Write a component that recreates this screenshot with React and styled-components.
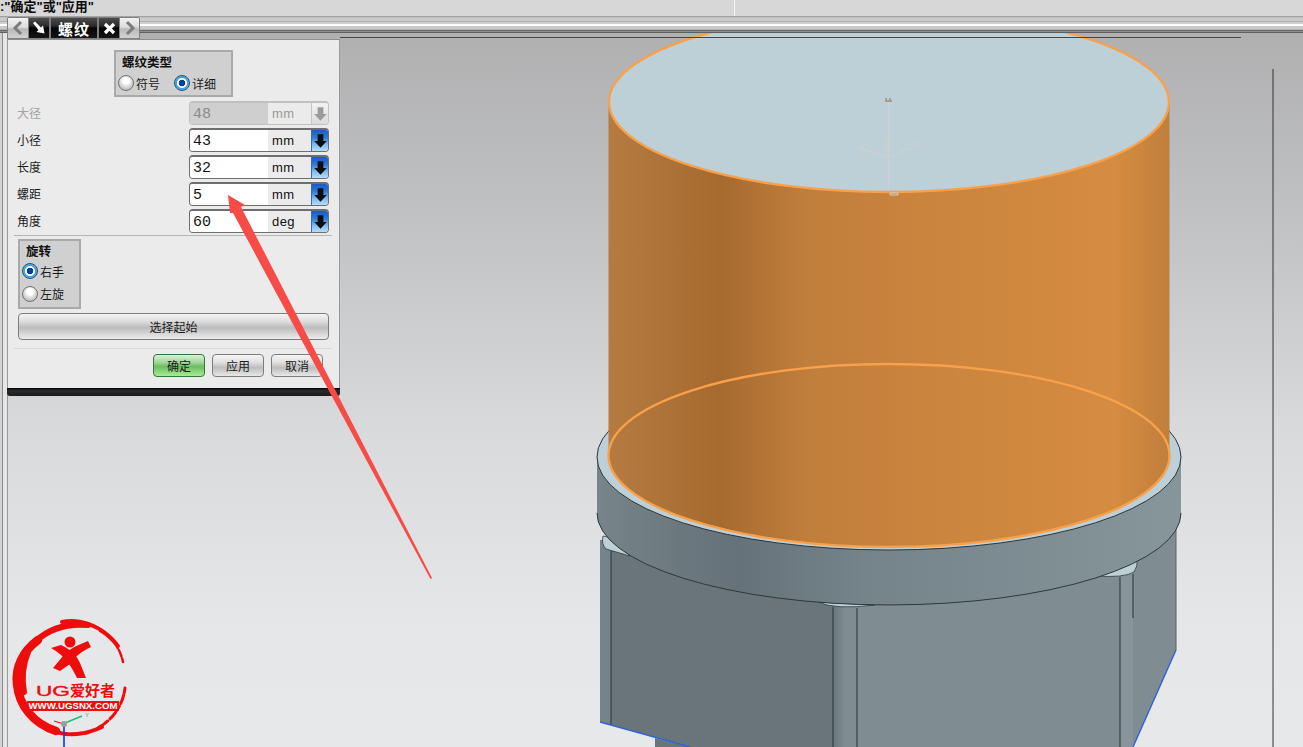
import React from "react";
import styled, { createGlobalStyle } from "styled-components";

const CJK = `"Noto Sans CJK SC", "Liberation Sans", sans-serif`;

const Global = createGlobalStyle`
  html, body { margin: 0; padding: 0; overflow: hidden; background: #d6d6d6; }
  * { box-sizing: border-box; }
`;

const Page = styled.div`
  position: relative;
  width: 1303px;
  height: 747px;
  overflow: hidden;
  display: flex;
  flex-direction: column;
  font-family: ${CJK};
  font-size: 12px;
  color: #1c1c1c;
`;

const TopBar = styled.header`
  flex: none;
  height: 33px;
  display: flex;
  flex-direction: column;
`;
const MessageRow = styled.div`
  height: 16px;
  display: flex;
  background: #d7d7d7;
`;
const Message = styled.div`
  width: 735px;
  height: 16px;
  border-right: 1px solid #f4f4f4;
  font: bold 13px/13px "Liberation Sans", ${CJK};
  color: #0c0c0c;
  white-space: nowrap;
`;
const Rails = styled.div`
  height: 17px;
  background: linear-gradient(
    to bottom,
    #a2a2a2 0 1px, #c0c0c0 1px 2px, #cbcbcb 2px 5px, #b0b0b0 5px 6px,
    #d0d0d0 6px 8px, #ffffff 8px 10px, #c8c8c8 10px 13px, #b4b4b4 13px 14px,
    #666666 14px 15px, #8c8c8c 15px 16px, #5f5f5f 16px 17px
  );
`;

const Workspace = styled.main`
  flex: 1;
  min-height: 0;
  display: flex;
`;
const LeftStrip = styled.aside`
  flex: none;
  width: 8px;
  background: linear-gradient(
    to right,
    #d2d2d2 0 2px, #8a8a8a 2px 3px, #e6e6e6 3px 7px, #9a9a9a 7px 8px
  );
`;
const Viewport = styled.section`
  flex: 1;
  min-width: 0;
  background: linear-gradient(to bottom, #b0b0b1 0, #c0c1c3 180px, #d9dadc 400px, #e6e7e9 600px, #e7e8ea 100%);
`;
const Scene = styled.svg`
  display: block;
  width: 100%;
  height: 100%;
`;

const Dialog = styled.div`
  position: absolute;
  left: 7px;
  top: 17px;
  width: 333px;
  display: flex;
  flex-direction: column;
  align-items: flex-start;
`;
const TabBar = styled.div`
  display: flex;
  height: 22px;
  width: 133px;
  padding: 1px;
  gap: 1px;
  background: #7f7f7f;
  border-radius: 2px 2px 0 0;
`;
const NavTab = styled.div`
  width: 20px;
  flex: ${(p) => (p.$last ? 1 : "none")};
  display: flex;
  align-items: center;
  justify-content: center;
  background: linear-gradient(to bottom, #f2f2f2 0, #dedede 45%, #b9b9b9 55%, #d2d2d2 100%);
`;
const DarkTab = styled.div`
  width: ${(p) => p.$w || 20}px;
  margin: ${(p) => p.$m || 0};
  flex: none;
  display: flex;
  align-items: center;
  justify-content: center;
  background: linear-gradient(to bottom, #4c4c4c 0, #2a2a2a 40%, #060606 50%, #151515 100%);
  color: #fff;
  font-weight: 700;
  font-size: 15px;
  letter-spacing: 1px;
`;
const Panel = styled.div`
  width: 332px;
  margin-left: 1px;
  height: 349px;
  background: #ebebeb;
  border-top: 1px solid #8f8f8f;
  border-right: 1px solid #9a9a9a;
  padding: 10px 10px 0 10px;
  display: flex;
  flex-direction: column;
`;
const BottomBar = styled.div`
  width: 333px;
  height: 8px;
  background: linear-gradient(to bottom, #000 0, #2a2a2a 30%, #1c1c1c 100%);
  border-radius: 0 0 3px 3px;
`;
const Group = styled.div`
  background: #d0d0d0;
  border: 2px solid #a9a9a9;
  display: flex;
  flex-direction: column;
  width: ${(p) => p.$w}px;
  height: ${(p) => p.$h}px;
`;
const TypeGroup = styled(Group)`
  align-self: center;
  margin-bottom: 4px;
  padding: 2px 0 0 2px;
`;
const SpinGroup = styled(Group)`
  margin: 3px 0 4px;
  padding: 2px 0 0 2px;
`;
const GroupTitle = styled.div`
  font-weight: 700;
  font-size: 12.5px;
  line-height: 16px;
  padding-left: 4px;
  color: #111;
`;
const RadioLine = styled.div`
  display: flex;
  gap: 14px;
  margin-top: 5px;
`;
const RadioItem = styled.label`
  display: flex;
  align-items: center;
  gap: 2px;
  height: ${(p) => p.$h || 16}px;
  margin-top: ${(p) => p.$top || 0}px;
  font-size: 12px;
`;
const Radio = styled.span`
  width: 16px;
  height: 16px;
  flex: none;
  border-radius: 50%;
  border: 1px solid ${(p) => (p.$on ? "#2c4f6b" : "#707070")};
  background: ${(p) =>
    p.$on
      ? "radial-gradient(circle at 50% 50%, #0a3f96 0 3px, #ffffff 3.6px 4.6px, #3aa0e4 5.4px, #7fd0f6 100%)"
      : "radial-gradient(circle at 50% 35%, #ffffff 0 3px, #e4e4e4 5px, #a6a6a6 100%)"};
`;
const FieldRow = styled.div`
  display: flex;
  align-items: center;
  justify-content: space-between;
  height: 24px;
  margin-bottom: 3px;
  color: ${(p) => (p.$off ? "#a2a2a2" : "#1c1c1c")};
`;
const FieldLabel = styled.span`
  margin: -2px 0 0 -1px;
  font-size: 12px;
`;
const Field = styled.div`
  width: 140px;
  height: 24px;
  display: flex;
  border: 1px solid ${(p) => (p.$off ? "#c0c0c0" : "#6e6e6e")};
  border-top-width: 2px;
  border-radius: 4px;
  overflow: hidden;
  background: #ebebeb;
`;
const FieldValue = styled.div`
  width: 78px;
  padding-left: 3px;
  font: 15px/23px "Liberation Mono", monospace;
  background: ${(p) => (p.$off ? "#cfcfcf" : "#ffffff")};
  color: ${(p) => (p.$off ? "#8a8a8a" : "#141414")};
`;
const FieldUnit = styled.div`
  flex: 1;
  padding-left: 4px;
  font: 13px/21px "Liberation Sans", sans-serif;
  letter-spacing: 0.4px;
  color: ${(p) => (p.$off ? "#999" : "#111")};
`;
const Spinner = styled.div`
  width: 17px;
  display: flex;
  align-items: center;
  justify-content: center;
  border-left: 1px solid ${(p) => (p.$off ? "#c4c4c4" : "#3a6cae")};
  background: ${(p) =>
    p.$off
      ? "linear-gradient(to bottom, #f2f2f2, #dcdcdc)"
      : "linear-gradient(to bottom, #1a5ac4 0, #2e78dc 35%, #7fbdf0 70%, #b8dcf8 100%)"};
`;
const Rule = styled.div`
  height: 1px;
  background: ${(p) => p.$c};
  margin: ${(p) => p.$m};
`;
const WideButton = styled.div`
  height: 27px;
  display: flex;
  align-items: center;
  justify-content: center;
  border: 1px solid #7d7d7d;
  border-radius: 4px;
  background: linear-gradient(to bottom, #f5f5f5 0, #dcdcdc 30%, #bcbcbc 55%, #d8d8d8 80%, #ececec 100%);
  font-size: 12px;
`;
const Actions = styled.div`
  display: flex;
  justify-content: flex-end;
  gap: 7px;
  padding-right: 6px;
`;
const ActionButton = styled.div`
  width: 52px;
  height: 23px;
  display: flex;
  align-items: center;
  justify-content: center;
  border: 1px solid ${(p) => (p.$primary ? "#2f7a35" : "#7d7d7d")};
  border-radius: 4px;
  font-size: 12px;
  background: ${(p) =>
    p.$primary
      ? "linear-gradient(to bottom, #dcf0d6 0, #a3d69b 35%, #6fbc63 55%, #a6ec92 100%)"
      : "linear-gradient(to bottom, #f5f5f5 0, #e0e0e0 35%, #bdbdbd 60%, #e8e8e8 100%)"};
`;
const Overlay = styled.svg`
  position: absolute;
  left: 0;
  top: 0;
  width: 1303px;
  height: 747px;
  pointer-events: none;
`;

const Chevron = ({ dir }) => (
  <svg width="12" height="16" viewBox="0 0 12 16">
    <path
      d={dir === "left" ? "M9 2 L3 8 L9 14" : "M3 2 L9 8 L3 14"}
      fill="none"
      stroke="#7b7b7b"
      strokeWidth="3"
    />
  </svg>
);
const PinIcon = () => (
  <svg width="14" height="14" viewBox="0 0 14 14">
    <path d="M1 2 L3 0.5 L9 6.5 L11 4.5 L12.5 12.5 L4.5 11 L6.5 9 Z" fill="#fff" />
  </svg>
);
const CloseIcon = () => (
  <svg width="13" height="13" viewBox="0 0 13 13">
    <path d="M2 2 L11 11 M11 2 L2 11" stroke="#fff" strokeWidth="3.2" />
  </svg>
);
const DownIcon = ({ off }) => (
  <svg width="15" height="16" viewBox="0 0 13 14">
    <path d="M4 1 H9 V7 H12 L6.5 13 L1 7 H4 Z" fill={off ? "#9a9a9a" : "#0e0e0e"} />
  </svg>
);

const fields = [
  { label: "大径", value: "48", unit: "mm", off: true },
  { label: "小径", value: "43", unit: "mm" },
  { label: "长度", value: "32", unit: "mm" },
  { label: "螺距", value: "5", unit: "mm" },
  { label: "角度", value: "60", unit: "deg" },
];

const CadScene = () => (
  <Scene viewBox="8 33 1295 714" preserveAspectRatio="none">
    <defs>
      <linearGradient id="cyl" x1="608" x2="1169" y1="0" y2="0" gradientUnits="userSpaceOnUse">
        <stop offset="0" stopColor="#b57b40" />
        <stop offset="0.2" stopColor="#a66a2f" />
        <stop offset="0.35" stopColor="#c07e3c" />
        <stop offset="0.6" stopColor="#cb853e" />
        <stop offset="0.9" stopColor="#d68c40" />
        <stop offset="1" stopColor="#c07f3d" />
      </linearGradient>
      <linearGradient id="collar" x1="597" x2="1181" y1="0" y2="0" gradientUnits="userSpaceOnUse">
        <stop offset="0" stopColor="#77858a" />
        <stop offset="0.14" stopColor="#6b787e" />
        <stop offset="0.24" stopColor="#65727a" />
        <stop offset="0.46" stopColor="#75838a" />
        <stop offset="1" stopColor="#87969b" />
      </linearGradient>
      <linearGradient id="fillet" x1="833" x2="857" y1="0" y2="0" gradientUnits="userSpaceOnUse">
        <stop offset="0" stopColor="#69757a" />
        <stop offset="0.5" stopColor="#7f8d92" />
        <stop offset="1" stopColor="#7f8d92" />
      </linearGradient>
    </defs>

    <path d="M1273 69 V747" stroke="#333" strokeWidth="1" />

    {/* hex body */}
    <path d="M655 738 L690 747 H655 Z" fill="#69757a" />
    <path d="M600 540 H611 V725 L600 722 Z" fill="#75838a" />
    <path d="M611 545 L833 600 V747 H690 L611 725 Z" fill="#69757a" />
    <rect x="833" y="600" width="24" height="147" fill="url(#fillet)" />
    <path d="M857 600 L1120 570 V747 H857 Z" fill="#7f8d92" />
    <path d="M1120 570 L1176 525 V650 L1133 747 H1120 Z" fill="#7f8d92" />
    <rect x="1120" y="570" width="13" height="177" fill="#87959a" />
    <path d="M603 536 Q601 544 606 549 L630 556 L612 538 Z" fill="#bdd0d8" stroke="#2c3a40" strokeWidth="0.8" />
    <path d="M818 602 Q835 610 875 605 Z" fill="#bdd0d8" stroke="#2c3a40" strokeWidth="0.8" />
    <path d="M1095 576 Q1125 578 1134 572 Q1138 566 1137 560 Z" fill="#bdd0d8" stroke="#2c3a40" strokeWidth="0.8" />
    <g stroke="#33393c" strokeWidth="1.1" fill="none">
      <path d="M611 551 V725" />
      <path d="M833 607 V747" />
      <path d="M857 608 V747" />
      <path d="M1120 577 V747" />
      <path d="M1133 574 V618" />
      <path d="M1176 530 V650" stroke="#5f6c70" />
    </g>
    <path d="M600 722 L690 747" stroke="#2f62d8" strokeWidth="1.4" />
    <path d="M1176 650 L1133 747" stroke="#2f62d8" strokeWidth="1.4" />

    {/* collar */}
    <path d="M597 457 V513 A292 92 0 0 0 1181 513 V457 Z" fill="url(#collar)" />
    <path d="M597 513 A292 92 0 0 0 1181 513" fill="none" stroke="#2f373a" strokeWidth="1" />
    <ellipse cx="889" cy="457" rx="292" ry="93" fill="#bdd0d8" stroke="#2b3438" strokeWidth="1" />

    {/* cylinder */}
    <path d="M608.5 102 V455.5 A280.5 91.5 0 0 0 1169.5 455.5 V102 Z" fill="url(#cyl)" />
    <ellipse cx="889" cy="455.5" rx="280.5" ry="91.5" fill="none" stroke="#f9a04a" strokeWidth="2.4" />
    <ellipse cx="889" cy="102" rx="280" ry="90" fill="#bdd0d8" stroke="#f9a04a" strokeWidth="2.4" />

    {/* WCS triad on top face */}
    <g stroke="#cfd0d0" strokeWidth="1" fill="none">
      <path d="M888.5 101 V190" strokeWidth="1.2" />
      <path d="M889 157 L860 148 M889 157 L910 148" strokeWidth="1.2" />
      <circle cx="888.5" cy="145" r="5" />
      <path d="M868 143 L860 147 L866 151" />
      <path d="M915 141 L924 147 M924 141 L915 147" />
      <path d="M890 193 H898 V195 H890 Z" />
    </g>
    <path d="M885 101 H892 M886 100 V98 M890 100 V98" stroke="#8f6a42" strokeWidth="1" />

    <path d="M340 37.5 H1241" stroke="#4a4540" strokeWidth="1" />
  </Scene>
);

const Logo = () => (
  <g>
    <g fill="none" stroke="#ee0d0d" strokeLinecap="round">
      <path d="M38 640 C22 652 15 668 17 684 C19 706 34 724 56 731" strokeWidth="8.5" />
      <path d="M28 652 C23 664 21 676 24 692" strokeWidth="6" />
      <path d="M36 641 C48 630 66 623 88 625" strokeWidth="6" />
      <path d="M62 622 C84 618 104 628 118 646" strokeWidth="4" strokeDasharray="14 2 6 2" />
      <path d="M100 631 C112 637 120 648 123 662" strokeWidth="2.5" strokeDasharray="7 2" />
      <path d="M125 688 C123 706 112 720 98 728" strokeWidth="3" strokeDasharray="5 2 9 3" />
      <path d="M50 730 C68 737 84 735 102 727" strokeWidth="4" strokeDasharray="12 2 5 2" />
    </g>
    <circle cx="70" cy="642" r="5.5" fill="#ee0d0d" />
    <path d="M51 648 L61 645 C72 650 77 656 80 663 L86 678 L77 678 C72 668 66 656 51 648 Z" fill="#ee0d0d" />
    <path d="M88 641 L91 647 C80 652 74 658 70 664 L60 671 L53 668 L63 656 C70 648 78 645 88 641 Z" fill="#ee0d0d" />
    <text x="36" y="696" fontFamily="Liberation Sans, sans-serif" fontWeight="400" fontSize="15" stroke="#ee0d0d" strokeWidth="0.4" fill="#ee0d0d" textLength="34" lengthAdjust="spacingAndGlyphs">UG</text>
    <text x="70" y="696" fontFamily="Noto Sans CJK SC, sans-serif" fontWeight="700" fontSize="15" fill="#ee0d0d">爱好者</text>
    <rect x="27" y="701" width="92" height="10" fill="#ee0d0d" />
    <text x="28.5" y="709.3" fontFamily="Liberation Sans, sans-serif" fontWeight="700" fontSize="8.5" fill="#fff" textLength="89" lengthAdjust="spacingAndGlyphs">WWW.UGSNX.COM</text>
    <path d="M64 724 V747" stroke="#1a2fe8" strokeWidth="1.6" />
    <path d="M65 723 L82 716" stroke="#17c07a" strokeWidth="1.4" />
    <path d="M64 724 L54 721" stroke="#ee1515" strokeWidth="1.2" />
    <circle cx="64" cy="724" r="3" fill="#9d9d9d" />
    <text x="85" y="717" fontFamily="Liberation Sans, sans-serif" fontSize="6" fill="#2fa888">Y</text>
  </g>
);

export default function App() {
  return (
    <Page>
      <Global />
      <TopBar>
        <MessageRow>
          <Message>:"确定"或"应用"</Message>
        </MessageRow>
        <Rails />
      </TopBar>
      <Workspace>
        <LeftStrip />
        <Viewport>
          <CadScene />
        </Viewport>
      </Workspace>

      <Dialog>
        <TabBar>
          <NavTab><Chevron dir="left" /></NavTab>
          <DarkTab><PinIcon /></DarkTab>
          <DarkTab $w={46} $m="0 1px">螺纹</DarkTab>
          <DarkTab><CloseIcon /></DarkTab>
          <NavTab $last><Chevron dir="right" /></NavTab>
        </TabBar>
        <Panel>
          <TypeGroup $w={119} $h={47}>
            <GroupTitle>螺纹类型</GroupTitle>
            <RadioLine>
              <RadioItem><Radio />符号</RadioItem>
              <RadioItem><Radio $on />详细</RadioItem>
            </RadioLine>
          </TypeGroup>
          {fields.map((f) => (
            <FieldRow key={f.label} $off={f.off}>
              <FieldLabel>{f.label}</FieldLabel>
              <Field $off={f.off}>
                <FieldValue $off={f.off}>{f.value}</FieldValue>
                <FieldUnit $off={f.off}>{f.unit}</FieldUnit>
                <Spinner $off={f.off}><DownIcon off={f.off} /></Spinner>
              </Field>
            </FieldRow>
          ))}
          <Rule $c="#b5b5b5" $m="-1px -3px 0 -4px" />
          <SpinGroup $w={63} $h={70}>
            <GroupTitle>旋转</GroupTitle>
            <RadioItem $h={22} $top={1}><Radio $on />右手</RadioItem>
            <RadioItem $h={23}><Radio />左旋</RadioItem>
          </SpinGroup>
          <WideButton>选择起始</WideButton>
          <Rule $c="#d8d8d8" $m="8px -3px 5px -4px" />
          <Actions>
            <ActionButton $primary>确定</ActionButton>
            <ActionButton>应用</ActionButton>
            <ActionButton>取消</ActionButton>
          </Actions>
        </Panel>
        <BottomBar />
      </Dialog>

      <Overlay viewBox="0 0 1303 747">
        <Logo />
        <path
          d="M228 195 L245 205 L241 207 L432 578 L430.5 579 L233 213 L230 213 Z"
          fill="#f74b47"
        />
      </Overlay>
    </Page>
  );
}
